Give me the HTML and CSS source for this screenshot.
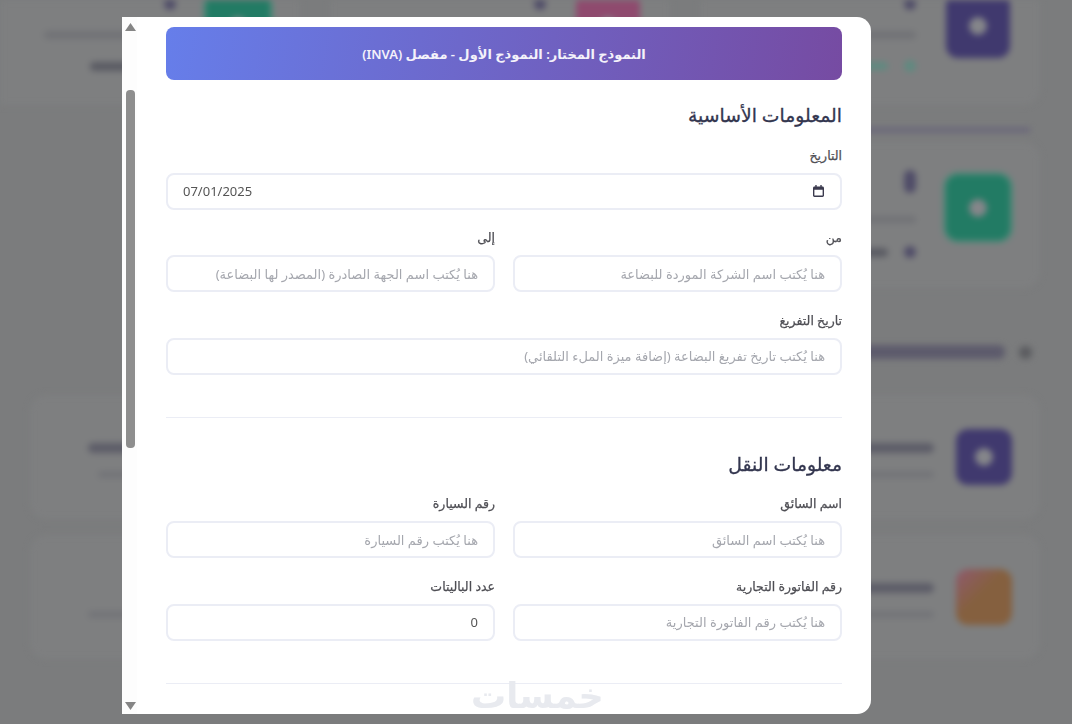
FILE: index.html
```html
<!DOCTYPE html>
<html lang="ar" dir="rtl">
<head>
    <meta charset="UTF-8">
    <meta name="viewport" content="width=device-width, initial-scale=1.0">
    <title>نموذج</title>
    <link rel="stylesheet" href="styles.css">
</head>
<body>
    <!-- blurred page behind the modal -->
    <div class="page">
        <div class="stats">
            <div class="card">
                <div class="tile tile-purple"><span class="dot"></span></div>
                <div class="card-text">
                    <span class="blob b-dot"></span>
                    <span class="blob b-line"></span>
                    <div class="meta"><span class="blob b-dot b-green-dot"></span><span class="blob b-green"></span></div>
                </div>
            </div>
            <div class="card">
                <div class="tile tile-pink"><span class="dot"></span></div>
                <div class="card-text">
                    <span class="blob b-dot"></span>
                    <span class="blob b-line"></span>
                    <div class="meta"><span class="blob b-dot"></span><span class="blob b-dark"></span></div>
                </div>
            </div>
            <div class="card">
                <div class="tile tile-green"><span class="dot"></span></div>
                <div class="card-text">
                    <span class="blob b-dot"></span>
                    <span class="blob b-line"></span>
                    <div class="meta"><span class="blob b-dot"></span><span class="blob b-dark"></span></div>
                </div>
            </div>
        </div>
        <div class="rule"></div>
        <div class="stats stats-second">
            <div class="card card-second">
                <div class="tile tile-green"><span class="dot"></span></div>
                <div class="card-text">
                    <span class="blob b-dot b-tall"></span>
                    <span class="blob b-line"></span>
                    <div class="meta"><span class="blob b-dot"></span><span class="blob b-dark"></span></div>
                </div>
            </div>
        </div>
        <div class="heading-blur"><span class="blob b-mini"></span><span class="blob b-head"></span></div>
        <div class="card-wide">
            <div class="tile tile-small tile-purple"><span class="dot"></span></div>
            <div class="card-text card-text-wide"><span class="blob b-title"></span><span class="blob b-sub"></span></div>
            <div class="card-text card-text-wide side"><span class="blob b-title"></span><span class="blob b-sub"></span></div>
        </div>
        <div class="card-wide">
            <div class="tile tile-small tile-orange"></div>
            <div class="card-text card-text-wide"><span class="blob b-title"></span><span class="blob b-sub"></span></div>
            <div class="card-text card-text-wide side side-low"><span class="blob b-sub b-short"></span></div>
        </div>
    </div>

    <div class="overlay">
        <div class="modal">
            <div class="scrollbar">
                <svg class="arrow" viewBox="0 0 11 8"><path d="M5.500 0 11 8H0z"/></svg>
                <div class="thumb-track"><div class="thumb"></div></div>
                <svg class="arrow" viewBox="0 0 11 8"><path d="M0 0H11L5.500 8z"/></svg>
            </div>
            <div class="content">
                <div class="banner">النموذج المختار: النموذج الأول - مفصل (INVA)</div>

                <h3>المعلومات الأساسية</h3>
                <div class="field">
                    <label>التاريخ</label>
                    <div class="input input-date">
                        <svg class="cal" viewBox="0 0 12 13"><path d="M2.500 0v1.500H1.600C.7 1.500 0 2.200 0 3.100v8.300C0 12.300.7 13 1.600 13h8.800c.9 0 1.600-.7 1.600-1.600V3.100c0-.9-.7-1.600-1.600-1.600H9.500V0H8v1.500H4V0zM1.500 5h9v6.500h-9z"/></svg>
                        <span class="date-value">07/01/2025</span>
                    </div>
                </div>
                <div class="two">
                    <div class="field">
                        <label>من</label>
                        <div class="input ph">هنا يُكتب اسم الشركة الموردة للبضاعة</div>
                    </div>
                    <div class="field">
                        <label>إلى</label>
                        <div class="input ph">هنا يُكتب اسم الجهة الصادرة (المصدر لها البضاعة)</div>
                    </div>
                </div>
                <div class="field">
                    <label>تاريخ التفريغ</label>
                    <div class="input ph">هنا يُكتب تاريخ تفريغ البضاعة (إضافة ميزة الملء التلقائي)</div>
                </div>

                <hr>

                <h3 class="h-next">معلومات النقل</h3>
                <div class="two">
                    <div class="field">
                        <label>اسم السائق</label>
                        <div class="input ph">هنا يُكتب اسم السائق</div>
                    </div>
                    <div class="field">
                        <label>رقم السيارة</label>
                        <div class="input ph">هنا يُكتب رقم السيارة</div>
                    </div>
                </div>
                <div class="two">
                    <div class="field">
                        <label>رقم الفاتورة التجارية</label>
                        <div class="input ph">هنا يُكتب رقم الفاتورة التجارية</div>
                    </div>
                    <div class="field">
                        <label>عدد الباليتات</label>
                        <div class="input val">0</div>
                    </div>
                </div>

                <hr>
            </div>
            <div class="watermark">خمسات</div>
        </div>
    </div>
</body>
</html>
```

FILE: styles.css
```css
* {
    margin: 0;
    padding: 0;
    box-sizing: border-box;
}

html, body {
    height: 100%;
    overflow: hidden;
}

body {
    background-color: #7b7c7d;
    font-family: 'Noto Sans', 'DejaVu Sans', sans-serif;
}

/* page behind */
.page {
    width: 1072px;
    height: 724px;
    padding: 0 32px 0 30px;
    overflow: hidden;
    filter: blur(3px);
    display: flex;
    flex-direction: column;
}

.stats {
    display: grid;
    grid-template-columns: repeat(3, 340px);
    gap: 30px;
    margin-top: -37px;
}

.stats-second {
    margin-top: 10px;
}

.card {
    height: 142px;
    padding: 30px;
    border-radius: 16px;
    background-color: #7e7f80;
    display: flex;
    gap: 30px;
}

.card-second {
    height: 146px;
    padding-top: 33px;
}

.card-text {
    flex: 1;
    display: flex;
    flex-direction: column;
    align-items: flex-start;
    gap: 21px;
    padding-top: 5px;
}

.card-second .card-text {
    gap: 23px;
    padding-top: 0;
}

.meta {
    display: flex;
    align-items: center;
    gap: 16px;
}

.tile {
    width: 64px;
    height: 65px;
    flex-shrink: 0;
    border-radius: 12px;
    display: flex;
    align-items: center;
    justify-content: center;
}

.tile-small {
    width: 56px;
    height: 56px;
}

.tile-purple { background-color: #40396e; }
.tile-green { background-color: #227b64; box-shadow: 0 0 3px 2px #3f8f78; }
.tile-pink { background-color: #8f4a6e; }
.tile-orange { background: linear-gradient(135deg, #8f5a6e, #85603f 45%); }

.dot {
    width: 18px;
    height: 18px;
    border-radius: 50%;
    background-color: #85868a;
}

.blob {
    display: block;
    border-radius: 6px;
    background-color: #717276;
}

.b-dot { width: 12px; height: 12px; background-color: #4f4c68; }
.b-tall { height: 24px; margin-top: -5px; }
.b-line { width: 132px; height: 8px; }
.b-green-dot { background-color: #5f8a80; }
.b-green { width: 50px; height: 8px; background-color: #5f8a80; }
.b-dark { width: 58px; height: 9px; background-color: #5a5b63; }

.rule {
    height: 4px;
    width: 300px;
    margin: 23px 10px 0 0;
    background-color: #66627a;
}

.heading-blur {
    display: flex;
    gap: 14px;
    align-items: center;
    height: 20px;
    margin: 54px 8px 0 0;
}

.b-mini { width: 13px; height: 13px; background-color: #5b5c60; }
.b-head { width: 180px; height: 14px; background-color: #5d5b6c; }

.card-wide {
    height: 124px;
    margin-top: 33px;
    padding: 0 28px;
    border-radius: 16px;
    background-color: #7e7f80;
    display: flex;
    align-items: center;
    gap: 22px;
}

.card-wide + .card-wide {
    margin-top: 16px;
}

.card-text-wide {
    flex: none;
    gap: 18px;
    padding-top: 6px;
}

.side {
    margin-inline-start: auto;
    margin-left: 30px;
}

.side-low {
    padding-top: 34px;
}

.b-title { width: 100px; height: 10px; background-color: #5d5d68; }
.b-sub { width: 90px; height: 7px; background-color: #737478; }
.b-short { width: 78px; }

/* modal */
.overlay {
    position: fixed;
    inset: 0;
    padding: 17px 201px 0 122px;
}

.modal {
    position: relative;
    width: 749px;
    height: 697px;
    background-color: #fff;
    border-radius: 0 14px 14px 0;
    display: flex;
    flex-direction: row-reverse;
}

.scrollbar {
    width: 15px;
    padding: 0 2px 0 4px;
    display: flex;
    flex-direction: column;
    align-items: center;
    background-color: #fdfdfd;
}

.arrow {
    width: 11px;
    height: 8px;
    fill: #858585;
    margin: 6px 0 4px;
    flex-shrink: 0;
}

.thumb-track {
    flex: 1;
    padding-top: 55px;
    padding-bottom: 248px;
    width: 100%;
    display: flex;
}

.thumb {
    flex: 1;
    background-color: #8e8e8e;
    border-radius: 4px;
}

.content {
    flex: 1;
    padding: 10px 29px 0 29px;
}

.banner {
    height: 53px;
    border-radius: 8px;
    background: linear-gradient(100deg, #667eea, #764ba2);
    color: #f4f2fa;
    font-size: 13px;
    font-weight: 600;
    display: flex;
    align-items: center;
    justify-content: center;
}

h3 {
    font-size: 18.800px;
    font-weight: 500;
    color: #33364f;
    margin-top: 23px;
    line-height: 24px;
    -webkit-text-stroke: 0.3px #33364f;
}

.h-next {
    margin-top: 34px;
}

.field {
    display: flex;
    flex-direction: column;
    flex: 1;
    margin-top: 19.600px;
}

label {
    font-size: 12.500px;
    font-weight: 500;
    color: #4f4f55;
    line-height: 17px;
    margin-bottom: 9px;
    -webkit-text-stroke: 0.25px #4f4f55;
}

.input {
    height: 37px;
    border: 2px solid #ebedf5;
    border-radius: 8px;
    padding: 0 15px;
    font-size: 13px;
    display: flex;
    align-items: center;
}

.ph {
    color: #a5a7ae;
}

.val {
    color: #555;
}

.input-date {
    justify-content: space-between;
}

.cal {
    width: 11px;
    height: 12px;
    margin-right: 1px;
    fill: #3b3a4e;
}

.date-value {
    color: #555;
    direction: ltr;
}

.two {
    display: flex;
    gap: 18px;
}

hr {
    border: none;
    border-top: 1px solid #ebedf5;
    margin-top: 42px;
}

.watermark {
    position: absolute;
    left: 349px;
    bottom: -6px;
    font-size: 35px;
    font-weight: 700;
    line-height: 50px;
    color: #e8eaef;
}
```
